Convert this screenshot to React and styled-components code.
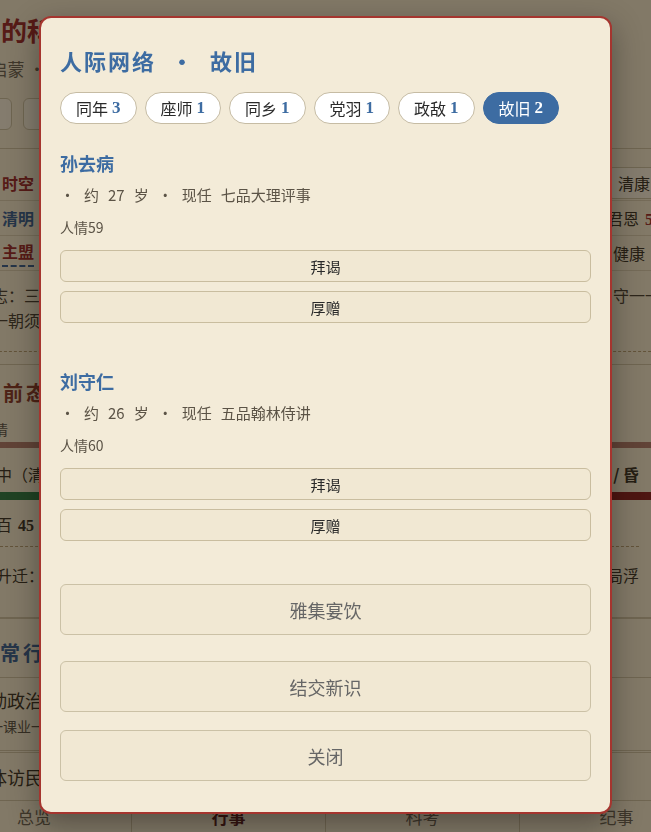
import React, { useState } from "react";
import styled, { createGlobalStyle, css } from "styled-components";

const GlobalStyle = createGlobalStyle`
  * { box-sizing: border-box; }
  html, body { margin: 0; padding: 0; }
  body {
    background: #f2e6cb;
    font-family: "Noto Sans CJK SC", sans-serif;
    overflow: hidden;
  }
`;

const CJK = `"Noto Sans CJK SC", sans-serif`;
const NUM = `"Liberation Serif", "Noto Sans CJK SC", serif`;

const tabs = [
  { label: "同年", count: 3 },
  { label: "座师", count: 1 },
  { label: "同乡", count: 1 },
  { label: "党羽", count: 1 },
  { label: "政敌", count: 1 },
  { label: "故旧", count: 2 }
];

const people = {
  故旧: [
    { name: "孙去病", age: 27, post: "七品大理评事", favor: 59 },
    { name: "刘守仁", age: 26, post: "五品翰林侍讲", favor: 60 }
  ]
};

/* ---------- page behind the dialog ---------- */

// the game page is wider than the window and sits scrolled 63px to the right
const Page = styled.div`
  width: 776px;
  height: 832px;
  margin-left: -63px;
  padding: 14px 12px 0;
  display: flex;
  flex-direction: column;
  color: #3b3326;
`;

const PageTitle = styled.h1`
  margin: 0;
  font: 700 26px/32px ${CJK};
  color: #9b2b2b;
`;

const SubLine = styled.div`
  margin-top: 12px;
  font: 17px/22px ${CJK};
  color: #6b6252;
  white-space: pre;
`;

const StatRow = styled.div`
  margin-top: 18px;
  display: flex;
  gap: 11px;
`;

const StatBox = styled.div`
  width: 63px;
  height: 32px;
  border: 1px solid #cbbf9f;
  border-radius: 6px;
  background: #f6edd9;
`;

const Card = styled.div`
  margin-top: ${p => p.$top || 0}px;
  padding: ${p => p.$pad};
  border-top: 1px solid #cdbf9f;
  border-bottom: 1px ${p => (p.$dashed ? "dashed #b59c70" : "solid #cdbf9f")};
`;

const InfoRow = styled.div`
  height: 35px;
  padding-left: 10px;
  display: flex;
  align-items: center;
  justify-content: space-between;
  border-bottom: 1px solid #d8cbad;
  font: 16px ${CJK};
`;

const Tag = styled.span`
  font-weight: 700;
  color: ${p => p.$color};
  ${p =>
    p.$underline &&
    css`
      border-bottom: 2px dashed #3a5f8f;
      padding-bottom: 2px;
    `}
`;

const Pill = styled.span`
  padding: 3px 10px;
  border: 1px solid #cbbf9f;
  border-radius: 6px;
  background: #f6edd9;
`;

const Strong = styled.b`
  font-family: ${NUM};
  color: ${p => p.$color || "#3b3326"};
  margin-left: 6px;
`;

const Prose = styled.div`
  padding: 12px 0 18px;
  display: flex;
  justify-content: space-between;
  font: 16px/25px ${CJK};
  color: #4a4133;
`;

const Heading = styled.div`
  font: 700 20px/28px ${CJK};
  letter-spacing: 3px;
  color: ${p => p.$color};
`;

const Small = styled.div`
  margin-top: 12px;
  display: flex;
  justify-content: space-between;
  font: 14px/20px ${CJK};
  color: #5b5346;
`;

const Bar = styled.div`
  height: ${p => p.$h}px;
  margin: ${p => p.$m};
  display: flex;
  background: ${p => p.$bg || "transparent"};
`;

const BarPart = styled.div`
  flex: ${p => p.$flex};
  background: ${p => p.$bg};
`;

const Line = styled.div`
  display: flex;
  justify-content: space-between;
  font: ${p => p.$size || 16}px/24px ${CJK};
  color: #3b3326;
  padding: ${p => p.$pad || 0};
  border-bottom: ${p => p.$border || "none"};
`;

const SubNote = styled.small`
  font-size: 14px;
  color: #5b5346;
`;

const BottomNav = styled.nav`
  margin-top: auto;
  height: 32px;
  display: grid;
  grid-template-columns: repeat(4, 1fr);
  margin-left: -12px;
  margin-right: -12px;
  border-top: 1px solid #cdbf9f;
`;

const NavItem = styled.div`
  display: flex;
  align-items: center;
  justify-content: center;
  font: ${p => (p.$active ? 700 : 400)} 17px ${CJK};
  color: ${p => (p.$active ? "#5a1f1f" : "#6b6252")};
  border-left: ${p => (p.$first ? "none" : "1px solid #cdbf9f")};
`;

const Overlay = styled.div`
  position: fixed;
  inset: 0;
  background: rgba(18, 12, 4, 0.5);
`;

/* ---------- dialog ---------- */

const Modal = styled.div`
  position: fixed;
  top: 16px;
  left: 39px;
  width: 573px;
  padding: 26px 19px 31px;
  background: #f3ebd8;
  border: 2px solid #a5352f;
  border-radius: 12px;
  box-shadow: 0 10px 30px rgba(0, 0, 0, 0.35);
`;

const ModalTitle = styled.h2`
  margin: 0;
  font: 700 22px/32px ${CJK};
  letter-spacing: 2px;
  color: #3d6ca2;
  word-spacing: 8px;
`;

const ChipRow = styled.div`
  margin-top: 16px;
  display: flex;
  gap: 8px;
`;

const Chip = styled.button`
  height: 32px;
  padding: 0 15px;
  border-radius: 16px;
  border: 1px solid ${p => (p.$active ? "#3d6ca2" : "#c6bca4")};
  background: ${p => (p.$active ? "#3d6ca2" : "#fff")};
  color: ${p => (p.$active ? "#fff" : "#2a2a2a")};
  font: 16px ${CJK};
  display: flex;
  align-items: center;
  gap: 4px;
  cursor: pointer;
`;

const ChipCount = styled.b`
  font: 700 17px ${NUM};
  color: ${p => (p.$active ? "#fff" : "#3d6ca2")};
`;

const Person = styled.section`
  margin-top: ${p => (p.$first ? 26 : 45)}px;
`;

const PersonName = styled.h3`
  margin: 0;
  font: 700 18px/26px ${CJK};
  color: #3d6ca2;
`;

const Meta = styled.div`
  margin-top: 8px;
  display: flex;
  gap: 9px;
  font: 15px/22px ${CJK};
  color: #5b5346;
`;

const Favor = styled.div`
  margin-top: 11px;
  font: 14px/20px ${CJK};
  color: #5b5346;
`;

const ActionList = styled.div`
  margin-top: 13px;
  display: flex;
  flex-direction: column;
  gap: 9px;
`;

const SmallButton = styled.button`
  height: 32px;
  width: 100%;
  border: 1px solid #c9bd9f;
  border-radius: 6px;
  background: #f1e8d3;
  color: #2a2a2a;
  font: 15px ${CJK};
  cursor: pointer;
`;

const BigButton = styled.button`
  height: 51px;
  width: 100%;
  margin-top: ${p => p.$top}px;
  border: 1px solid #cbc1a6;
  border-radius: 6px;
  background: #f1e8d3;
  color: #666;
  font: 18px ${CJK};
  cursor: pointer;
`;

function Background() {
  return (
    <Page>
      <PageTitle>寒门的科举之路</PageTitle>
      <SubLine>学业  启蒙 · 第三年 · 春</SubLine>
      <StatRow>
        {Array.from({ length: 8 }).map((_, i) => (
          <StatBox key={i} />
        ))}
      </StatRow>
      <Card $top={18} $pad="17px 40px 0 43px" $dashed>
        <InfoRow>
          <Tag $color="#9b2b2b">时空</Tag>
          <Pill>清康</Pill>
        </InfoRow>
        <InfoRow>
          <Tag $color="#3a5f8f">清明</Tag>
          <span>
            君恩<Strong $color="#9b2b2b">50</Strong>
          </span>
        </InfoRow>
        <InfoRow>
          <Tag $color="#9b2b2b" $underline>主盟</Tag>
          <span>健康　</span>
        </InfoRow>
        <Prose>
          <span>
            志：三年苦读
            <br />
            一朝须得功名
          </span>
          <span>守一一</span>
        </Prose>
      </Card>
      <Card $top={12} $pad="14px 62px 0 31px">
        <Heading $color="#8b3a2a">目前态势</Heading>
        <Small>
          <span>心情</span>
          <span>　</span>
        </Small>
        <Bar $h={6} $m="3px -62px 0 -31px" $bg="#b07a6a" />
        <Line $pad="14px 0 0">
          <span>时中（清明）</span>
          <b>/ 昏</b>
        </Line>
        <Bar $h={8} $m="6px -62px 0 -31px">
          <BarPart $flex={1} $bg="#2f7a45" />
          <BarPart $flex={4} $bg="transparent" />
          <BarPart $flex={1} $bg="#8b2020" />
        </Bar>
        <Line $pad="12px 0 8px" $border="1px dashed #b59c70">
          <span>
            名百<Strong>45</Strong>
          </span>
        </Line>
        <Line $pad="16px 0 30px">
          <span>途升迁：</span>
          <span>局浮</span>
        </Line>
      </Card>
      <Card $top={0} $pad="20px 0 10px 28px">
        <Heading $color="#3a5f8f">日常行事</Heading>
      </Card>
      <Line $size={18} $pad="10px 0 12px 40px" $border="3px double #cdbf9f">
        <span>
          勤政治事
          <br />
          <SubNote>一课业一</SubNote>
        </span>
      </Line>
      <Line $size={18} $pad="12px 0 0 40px">
        <span>体访民情</span>
      </Line>
      <BottomNav>
        <NavItem $first>总览</NavItem>
        <NavItem $active>行事</NavItem>
        <NavItem>科考</NavItem>
        <NavItem>纪事</NavItem>
      </BottomNav>
    </Page>
  );
}

export default function App() {
  const [active, setActive] = useState("故旧");
  const list = people[active] || [];

  return (
    <>
      <GlobalStyle />
      <Background />
      <Overlay />
      <Modal>
        <ModalTitle>人际网络 • 故旧</ModalTitle>
        <ChipRow>
          {tabs.map(t => (
            <Chip key={t.label} $active={t.label === active} onClick={() => setActive(t.label)}>
              {t.label}
              <ChipCount $active={t.label === active}>{t.count}</ChipCount>
            </Chip>
          ))}
        </ChipRow>
        {list.map((p, i) => (
          <Person key={p.name} $first={i === 0}>
            <PersonName>{p.name}</PersonName>
            <Meta>
              <span>·</span>
              <span>约</span>
              <span>{p.age}</span>
              <span>岁</span>
              <span>·</span>
              <span>现任</span>
              <span>{p.post}</span>
            </Meta>
            <Favor>人情{p.favor}</Favor>
            <ActionList>
              <SmallButton>拜谒</SmallButton>
              <SmallButton>厚赠</SmallButton>
            </ActionList>
          </Person>
        ))}
        <BigButton $top={43}>雅集宴饮</BigButton>
        <BigButton $top={26}>结交新识</BigButton>
        <BigButton $top={18}>关闭</BigButton>
      </Modal>
    </>
  );
}
